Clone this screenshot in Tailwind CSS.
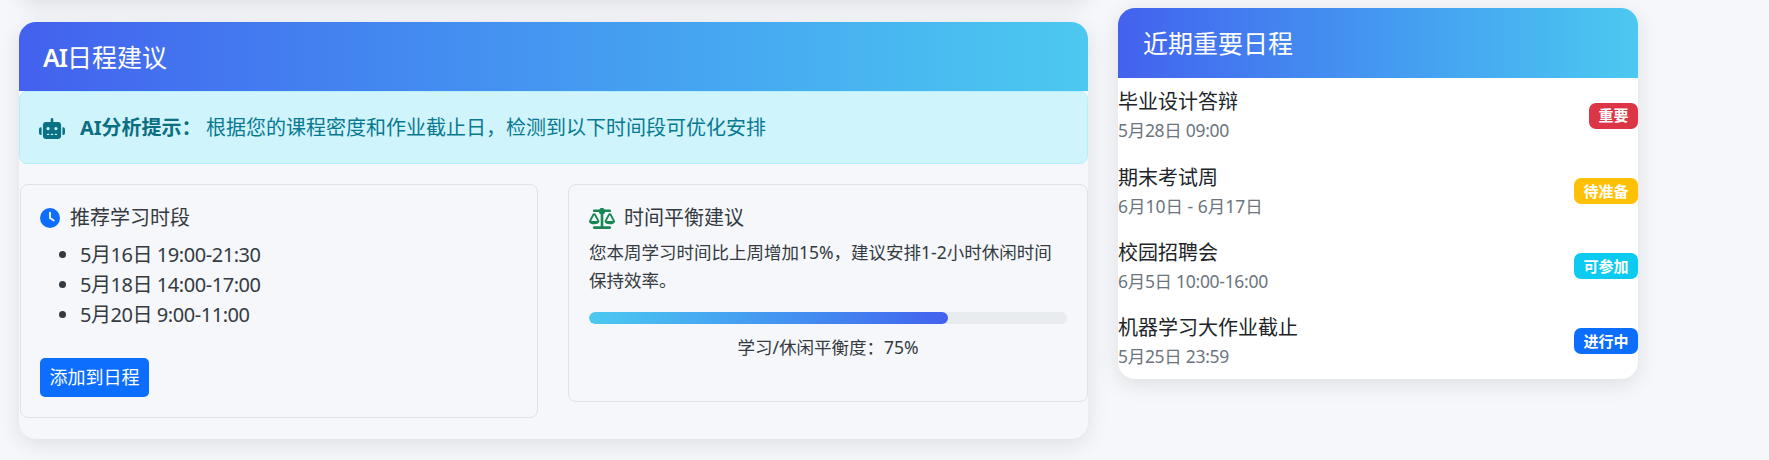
<!DOCTYPE html>
<html><head><meta charset="utf-8"><script src="https://cdn.jsdelivr.net/npm/@tailwindcss/browser@4"></script></head>
<body class="bg-[#f5f7fb] overflow-hidden h-[460px] font-['Noto_Sans','Noto_Sans_CJK_SC',sans-serif] text-[#212529]">
<div class="flex items-start pl-[19px] relative">
  <div class="absolute left-[19px] top-[-40px] w-[1069px] h-[40px] rounded-[17px] shadow-[0_5px_22px_rgba(0,0,0,0.1)]"></div>
  <div class="w-[1069px] mt-[22px] rounded-[17px] bg-[#f5f7fb] shadow-[0_5px_22px_rgba(0,0,0,0.1)] h-[417px] shrink-0">
    <div class="h-[69px] pt-[2px] rounded-t-[17px] bg-linear-to-r from-[#4361ee] to-[#4cc9f0] flex items-center px-[24px] text-[25px] text-white"><span class="font-semibold tracking-[-1px]">AI</span>日程建议</div>
    <div class="h-[73px] pt-[1px] bg-[#cff4fc] border border-[#b6effb] rounded-[8px] flex items-center pl-[19px] text-[20px] text-[#087990]">
      <svg class="w-[26px] h-[21px] mr-[15px]" viewBox="0 0 640 512"><path d="M320 0c17.700 0 32 14.300 32 32V96H472c39.800 0 72 32.200 72 72V440c0 39.800-32.200 72-72 72H168c-39.800 0-72-32.200-72-72V168c0-39.800 32.200-72 72-72H288V32c0-17.700 14.300-32 32-32zM208 384c-8.800 0-16 7.200-16 16s7.200 16 16 16h32c8.800 0 16-7.200 16-16s-7.200-16-16-16H208zm96 0c-8.800 0-16 7.200-16 16s7.200 16 16 16h32c8.800 0 16-7.200 16-16s-7.200-16-16-16H304zm96 0c-8.800 0-16 7.200-16 16s7.200 16 16 16h32c8.800 0 16-7.200 16-16s-7.200-16-16-16H400zM264 256a40 40 0 1 0-80 0 40 40 0 1 0 80 0zm152 40a40 40 0 1 0 0-80 40 40 0 1 0 0 80zM48 224H64V416H48c-26.500 0-48-21.500-48-48V272c0-26.500 21.500-48 48-48zm544 0c26.500 0 48 21.500 48 48v96c0 26.500-21.500 48-48 48H576V224h16z" fill="#0b7285"/></svg>
      <strong class="font-bold text-[#0b6e82] w-[126px] whitespace-nowrap">AI分析提示：</strong><span>根据您的课程密度和作业截止日，检测到以下时间段可优化安排</span>
    </div>
    <div class="flex gap-[30px] mt-[20px] items-start pl-[1px]">
      <div class="w-[518px] h-[234px] shrink-0 border border-[#dee2e6] rounded-[8px] pl-[19px] pt-[18px]">
        <div class="flex items-center h-[30px] text-[20px]">
          <svg class="w-[20px] h-[20px] mr-[10px]" viewBox="0 0 512 512"><path fill="#0d6efd" d="M256 0a256 256 0 1 1 0 512A256 256 0 1 1 256 0zM232 120V256c0 8 4 15.500 10.700 20l96 64c11 7.400 25.900 4.400 33.300-6.700s4.400-25.900-6.700-33.300L280 243.200V120c0-13.300-10.700-24-24-24s-24 10.700-24 24z"/></svg>
          <span class="text-[#343a40]">推荐学习时段</span>
        </div>
        <ul class="list-disc pl-[40px] mt-[7px] text-[20px] leading-[30px] text-[#343a40] marker:text-[#343a40] tracking-[-0.45px]">
          <li>5月16日 19:00-21:30</li>
          <li>5月18日 14:00-17:00</li>
          <li>5月20日 9:00-11:00</li>
        </ul>
        <button class="mt-[28px] block w-[109px] h-[39px] rounded-[5px] bg-[#0d6efd] text-white text-[18px] whitespace-nowrap">添加到日程</button>
      </div>
      <div class="w-[520px] h-[218px] shrink-0 border border-[#dee2e6] rounded-[8px] px-[20px] pt-[18px]">
        <div class="flex items-center h-[30px] text-[20px]">
          <svg class="w-[26px] h-[21px] mr-[9px]" viewBox="0 0 640 512"><path fill="#198754" d="M384 32H512c17.700 0 32 14.300 32 32s-14.300 32-32 32H398.400c-5.200 25.800-22.900 47.100-46.400 57.300V448H512c17.700 0 32 14.300 32 32s-14.300 32-32 32H320 128c-17.700 0-32-14.300-32-32s14.300-32 32-32H288V153.300c-23.500-10.300-41.200-31.600-46.400-57.300H128c-17.700 0-32-14.300-32-32s14.300-32 32-32H256c14.600-19.400 37.800-32 64-32s49.400 12.600 64 32zM125.800 177.300L51.100 320H204.900L130.200 177.300c-.4-.8-1.300-1.300-2.200-1.300s-1.700 .5-2.200 1.300zM128 128c18.800 0 36 10.400 44.700 27l77.800 148.500c3.100 5.800 6.100 12.200 5.900 19.200c-2.800 44.300-51.500 76.300-128.400 76.300S2.400 367 -.4 322.700c-.2-7 2.800-13.400 5.900-19.200L83.300 155C92 138.400 109.200 128 128 128zm381.800 49.300L435.100 320H588.900L514.200 177.300c-.4-.8-1.300-1.300-2.200-1.300s-1.700 .5-2.200 1.300zM512 128c18.800 0 36 10.400 44.700 27l77.800 148.500c3.100 5.800 6.100 12.200 5.900 19.200c-2.800 44.300-51.500 76.300-128.400 76.300s-125.600-32-128.400-76.300c-.2-7 2.800-13.400 5.900-19.200L467.300 155c8.700-16.600 25.900-27 44.700-27z"/></svg>
          <span class="text-[#343a40]">时间平衡建议</span>
        </div>
        <p class="text-[17.5px] leading-[28px] mt-[5px] text-[#343a40] whitespace-nowrap">您本周学习时间比上周增加15%，建议安排1-2小时休闲时间<br>保持效率。</p>
        <div class="h-[12px] mt-[18px] rounded-full bg-[#e9ecef] overflow-hidden"><div class="h-full w-[75%] rounded-full bg-linear-to-r from-[#4cc9f0] to-[#4361ee]"></div></div>
        <div class="text-center text-[17.5px] leading-[26px] mt-[10px] text-[#343a40]">学习/休闲平衡度：75%</div>
      </div>
    </div>
  </div>
  <div class="w-[520px] ml-[30px] mt-[8px] h-[371px] shrink-0 rounded-[17px] bg-white shadow-[0_5px_22px_rgba(0,0,0,0.1)] overflow-hidden">
    <div class="h-[70px] pt-[2px] bg-linear-to-r from-[#4361ee] to-[#4cc9f0] flex items-center px-[25px] text-[25px] text-white">近期重要日程</div>
    <div class="flex flex-col">
      <div class="h-[75.25px] flex items-center justify-between"><div class="-mt-[1px]"><div class="text-[20px] leading-[30px] text-[#212529]">毕业设计答辩</div><div class="text-[17.5px] leading-[26px] text-[#6c757d] tracking-[-0.3px]">5月28日 09:00</div></div><span class="bg-[#dc3545] rounded-[7px] px-[9.5px] h-[26px] flex items-center text-[15px] font-bold text-white">重要</span></div>
      <div class="h-[75.25px] flex items-center justify-between"><div><div class="text-[20px] leading-[30px] text-[#212529]">期末考试周</div><div class="text-[17.5px] leading-[26px] text-[#6c757d]">6月10日 - 6月17日</div></div><span class="bg-[#ffc107] rounded-[7px] px-[9.5px] h-[26px] flex items-center text-[15px] font-bold text-white">待准备</span></div>
      <div class="h-[75.25px] flex items-center justify-between"><div><div class="text-[20px] leading-[30px] text-[#212529]">校园招聘会</div><div class="text-[17.5px] leading-[26px] text-[#6c757d] tracking-[-0.3px]">6月5日 10:00-16:00</div></div><span class="bg-[#0dcaf0] rounded-[7px] px-[9.5px] h-[26px] flex items-center text-[15px] font-bold text-white">可参加</span></div>
      <div class="h-[75.25px] flex items-center justify-between"><div><div class="text-[20px] leading-[30px] text-[#212529]">机器学习大作业截止</div><div class="text-[17.5px] leading-[26px] text-[#6c757d] tracking-[-0.3px]">5月25日 23:59</div></div><span class="bg-[#0d6efd] rounded-[7px] px-[9.5px] h-[26px] flex items-center text-[15px] font-bold text-white">进行中</span></div>
    </div>
  </div>
</div>
</body></html>
